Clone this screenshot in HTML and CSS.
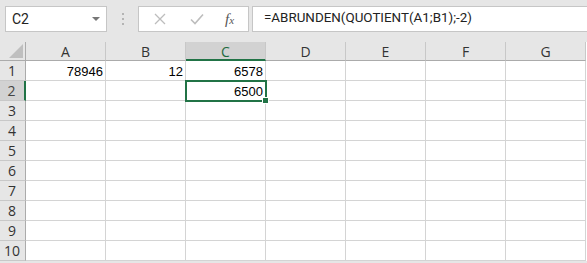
FILE: index.html
```html
<!DOCTYPE html>
<html lang="de">
<head>
  <meta charset="UTF-8" />
  <title>Mappe1 - Excel</title>
  <link rel="stylesheet" href="styles.css">
</head>
<body>
  <div class="formula-bar">
    <div class="name-box">
      <span>C2</span>
      <span class="drop"></span>
    </div>
    <svg class="grip" width="4" height="14" viewBox="0 0 4 14">
      <rect x="1" y="1" width="2" height="2" fill="#b4b4b4"/>
      <rect x="1" y="6" width="2" height="2" fill="#b4b4b4"/>
      <rect x="1" y="11" width="2" height="2" fill="#b4b4b4"/>
    </svg>
    <div class="fx-box">
      <svg class="btn-icon" width="12" height="12" viewBox="0 0 12 12">
        <path d="M1 1 L11 11 M11 1 L1 11" stroke="#bdbdbd" stroke-width="1.3" fill="none"/>
      </svg>
      <svg class="btn-icon" width="14" height="12" viewBox="0 0 14 12">
        <path d="M1 6.5 L5 10.5 L13 1.5" stroke="#bdbdbd" stroke-width="1.6" fill="none"/>
      </svg>
      <span class="fx">f<small>x</small></span>
    </div>
    <div class="formula-input">=ABRUNDEN(QUOTIENT(A1;B1);-2)</div>
  </div>

  <div class="sheet">
    <div class="corner"><span class="tri"></span></div>
    <div class="col-head">A</div>
    <div class="col-head">B</div>
    <div class="col-head active">C</div>
    <div class="col-head">D</div>
    <div class="col-head">E</div>
    <div class="col-head">F</div>
    <div class="col-head">G</div>

    <div class="row-head">1</div>
    <div class="cell">78946</div>
    <div class="cell">12</div>
    <div class="cell">6578</div>
    <div class="cell"></div><div class="cell"></div><div class="cell"></div><div class="cell"></div>

    <div class="row-head active">2</div>
    <div class="cell"></div>
    <div class="cell"></div>
    <div class="cell selected">6500<span class="handle"></span></div>
    <div class="cell"></div><div class="cell"></div><div class="cell"></div><div class="cell"></div>

    <div class="row-head">3</div>
    <div class="cell"></div><div class="cell"></div><div class="cell"></div><div class="cell"></div><div class="cell"></div><div class="cell"></div><div class="cell"></div>
    <div class="row-head">4</div>
    <div class="cell"></div><div class="cell"></div><div class="cell"></div><div class="cell"></div><div class="cell"></div><div class="cell"></div><div class="cell"></div>
    <div class="row-head">5</div>
    <div class="cell"></div><div class="cell"></div><div class="cell"></div><div class="cell"></div><div class="cell"></div><div class="cell"></div><div class="cell"></div>
    <div class="row-head">6</div>
    <div class="cell"></div><div class="cell"></div><div class="cell"></div><div class="cell"></div><div class="cell"></div><div class="cell"></div><div class="cell"></div>
    <div class="row-head">7</div>
    <div class="cell"></div><div class="cell"></div><div class="cell"></div><div class="cell"></div><div class="cell"></div><div class="cell"></div><div class="cell"></div>
    <div class="row-head">8</div>
    <div class="cell"></div><div class="cell"></div><div class="cell"></div><div class="cell"></div><div class="cell"></div><div class="cell"></div><div class="cell"></div>
    <div class="row-head">9</div>
    <div class="cell"></div><div class="cell"></div><div class="cell"></div><div class="cell"></div><div class="cell"></div><div class="cell"></div><div class="cell"></div>
    <div class="row-head">10</div>
    <div class="cell"></div><div class="cell"></div><div class="cell"></div><div class="cell"></div><div class="cell"></div><div class="cell"></div><div class="cell"></div>
  </div>
</body>
</html>
```

FILE: styles.css
```css
* {
  box-sizing: border-box;
  margin: 0;
  padding: 0;
}

body {
  background-color: #e6e6e6;
  font-family: 'Open Sans', sans-serif;
  color: #222;
  overflow: hidden;
}

/* formula bar */

.formula-bar {
  display: flex;
  align-items: flex-start;
  height: 42px;
  padding-top: 6px;
  padding-left: 5px;
}

.name-box {
  display: flex;
  align-items: center;
  justify-content: space-between;
  width: 102px;
  height: 26px;
  background-color: #ffffff;
  border: 1px solid #c6c6c6;
  padding: 0 6px 1px 6px;
  font-family: Roboto, sans-serif;
  font-size: 14px;
  color: #222;
}

.drop {
  width: 0;
  height: 0;
  border-left: 4px solid transparent;
  border-right: 4px solid transparent;
  border-top: 4px solid #777;
  margin-top: 1px;
}

.grip {
  margin: 6px 13px 0 14px;
}

.fx-box {
  display: flex;
  align-items: center;
  width: 111px;
  height: 26px;
  background-color: #ffffff;
  border: 1px solid #c6c6c6;
  padding-left: 15px;
}

.btn-icon {
  margin-right: 24px;
}

.fx {
  font-family: 'Liberation Serif', serif;
  font-style: italic;
  font-size: 15px;
  color: #555;
  margin-left: -3px;
}

.fx small {
  font-size: 11px;
}

.formula-input {
  flex: 1;
  height: 26px;
  margin-left: 3px;
  background-color: #ffffff;
  border: 1px solid #c6c6c6;
  border-right: none;
  padding: 3px 0 0 11px;
  font-family: Roboto, sans-serif;
  font-size: 13.4px;
  color: #222;
  white-space: nowrap;
}

/* sheet grid */

.sheet {
  display: grid;
  grid-template-columns: 26px repeat(7, 80px);
  grid-template-rows: 19px;
  grid-auto-rows: 20px;
  background-color: #ffffff;
}

.corner,
.col-head,
.row-head {
  background-color: #e6e6e6;
  font-size: 14px;
  color: #333;
}

.corner {
  position: relative;
  border-right: 1px solid #ababab;
  border-bottom: 1px solid #ababab;
}

.tri {
  position: absolute;
  right: 2px;
  bottom: 2px;
  width: 0;
  height: 0;
  border-left: 14px solid transparent;
  border-bottom: 14px solid #bfbfbf;
}

.col-head {
  display: flex;
  align-items: center;
  justify-content: center;
  border-right: 1px solid #c8c8c8;
  border-bottom: 1px solid #ababab;
  padding-top: 1px;
}

.col-head.active {
  background-color: #d2d2d2;
  border-bottom: 2px solid #217346;
  color: #1e6b40;
}

.row-head {
  display: flex;
  align-items: center;
  justify-content: center;
  border-right: 1px solid #ababab;
  border-bottom: 1px solid #c8c8c8;
  padding-right: 1px;
}

.row-head.active {
  background-color: #d2d2d2;
  border-right: 2px solid #217346;
  color: #444;
}

.cell {
  border-right: 1px solid #d4d4d4;
  border-bottom: 1px solid #d4d4d4;
  font-family: 'Liberation Sans', sans-serif;
  font-size: 13px;
  color: #000;
  text-align: right;
  padding: 3px 2px 0 0;
}

.cell.selected {
  position: relative;
  outline: 2px solid #217346;
  outline-offset: -1px;
  z-index: 1;
}

.handle {
  position: absolute;
  right: -4px;
  bottom: -4px;
  width: 7px;
  height: 7px;
  background-color: #217346;
  border: 1px solid #ffffff;
}
```
